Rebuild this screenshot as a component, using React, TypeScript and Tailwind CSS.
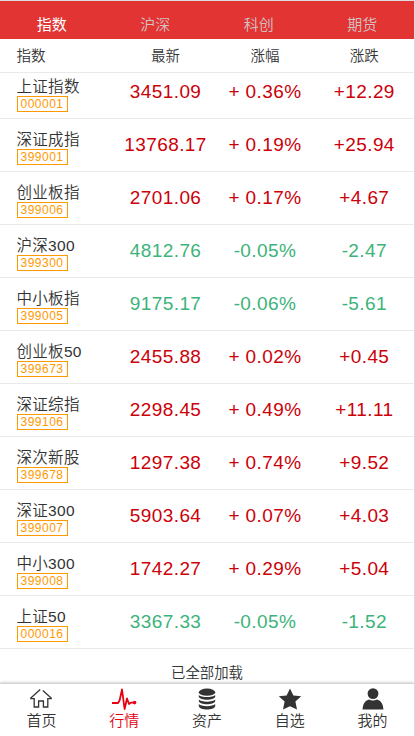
import { ReactNode } from "react";

interface IndexRow {
  name: string;
  code: string;
  price: string;
  percent: string;
  change: string;
}

const tabs = ["指数", "沪深", "科创", "期货"];

const rows: IndexRow[] = [
  { name: "上证指数", code: "000001", price: "3451.09", percent: "+ 0.36%", change: "+12.29" },
  { name: "深证成指", code: "399001", price: "13768.17", percent: "+ 0.19%", change: "+25.94" },
  { name: "创业板指", code: "399006", price: "2701.06", percent: "+ 0.17%", change: "+4.67" },
  { name: "沪深300", code: "399300", price: "4812.76", percent: "-0.05%", change: "-2.47" },
  { name: "中小板指", code: "399005", price: "9175.17", percent: "-0.06%", change: "-5.61" },
  { name: "创业板50", code: "399673", price: "2455.88", percent: "+ 0.02%", change: "+0.45" },
  { name: "深证综指", code: "399106", price: "2298.45", percent: "+ 0.49%", change: "+11.11" },
  { name: "深次新股", code: "399678", price: "1297.38", percent: "+ 0.74%", change: "+9.52" },
  { name: "深证300", code: "399007", price: "5903.64", percent: "+ 0.07%", change: "+4.03" },
  { name: "中小300", code: "399008", price: "1742.27", percent: "+ 0.29%", change: "+5.04" },
  { name: "上证50", code: "000016", price: "3367.33", percent: "-0.05%", change: "-1.52" },
];

const navItems: { label: string; icon: ReactNode }[] = [
  {
    label: "首页",
    icon: (
      <path
        d="M10.2 1.6 L0.8 10 V10.7 H4.2 V19 H8.6 V13 H13.4 V19 H17.8 V10.7 H21.2 V10 L12.8 2.4"
        fill="none"
        stroke="currentColor"
        strokeWidth="1.3"
      />
    ),
  },
  {
    label: "行情",
    icon: (
      <>
        <path
          d="M-1 15 H5 L6.6 12.5 L9 1.5 L11.6 21 L14 10.5 L16 16 L17.8 14.6 H21.5"
          fill="none"
          stroke="currentColor"
          strokeWidth="1.8"
          strokeLinejoin="round"
        />
        <circle cx="21.6" cy="14.6" r="1.8" fill="currentColor" />
      </>
    ),
  },
  {
    label: "资产",
    icon: (
      <g fill="currentColor">
        <ellipse cx="11" cy="4.2" rx="8.2" ry="3.6" />
        <path d="M2.8 7 C5 9.8 17 9.8 19.2 7 V8.8 C18 12.8 4 12.8 2.8 8.8 Z" />
        <path d="M2.8 11.6 C5 14.4 17 14.4 19.2 11.6 V13.2 C18 17.2 4 17.2 2.8 13.2 Z" />
        <path d="M2.8 16.1 C5 18.9 17 18.9 19.2 16.1 V18.2 C18 22.6 4 22.6 2.8 18.2 Z" />
      </g>
    ),
  },
  {
    label: "自选",
    icon: (
      <path
        d="M11 0.4 L14.4 7.4 L22.2 8.3 L16.4 13.6 L18 21.6 L11 18.2 L4 21.6 L5.6 13.6 L-0.2 8.3 L7.6 7.4 Z"
        fill="currentColor"
      />
    ),
  },
  {
    label: "我的",
    icon: (
      <g fill="currentColor">
        <circle cx="11" cy="5.6" r="5.4" />
        <path d="M0.6 21.6 C0.6 15 4 12.2 7 11.4 C9.4 12.9 12.6 12.9 15 11.4 C18 12.2 21.4 15 21.4 21.6 Z" />
      </g>
    ),
  },
];

function StockRow({ row }: { row: IndexRow }) {
  const color = row.change.startsWith("-") ? "text-[#3cb37a]" : "text-[#cc0009]";

  return (
    <div className="grid h-[53px] shrink-0 grid-cols-[28%_24%_24%_24%] border-b border-[#eaeaea] tracking-[0.4px]">
      <div className="pt-[10px] pl-[16.5px]">
        <p className="h-5 text-[15.5px] leading-[21px] tracking-[0.3px]">{row.name}</p>
        <p className="h-4 w-[51px] border border-[#ff9900] pl-[3px] text-xs leading-[14px] tracking-[0.5px] text-[#ff9900]">
          {row.code}
        </p>
      </div>
      {[row.price, row.percent, row.change].map((value, i) => (
        <div key={i} className={`pt-[13px] text-center text-[19px] leading-[26px] whitespace-nowrap ${color}`}>
          {value}
        </div>
      ))}
    </div>
  );
}

export default function App() {
  return (
    <div className="flex h-[736px] w-[415px] flex-col overflow-hidden border-t border-r border-[#dcdcdc] bg-white font-['Liberation_Sans','Noto_Sans_CJK_SC',sans-serif] font-[350] text-[#333]">
      <header className="grid h-[38px] shrink-0 grid-cols-4 bg-[#e33434] pt-[10px] text-center text-[15px] leading-7">
        {tabs.map((tab, i) => (
          <span key={tab} className={i === 0 ? "font-normal text-white" : "text-[#d1c4c4]"}>
            {tab}
          </span>
        ))}
      </header>

      <div className="grid h-[34px] shrink-0 grid-cols-[28%_24%_24%_24%] border-b border-[#eaeaea] text-center text-[14.5px] leading-[35px]">
        <span className="pl-[16.5px] text-left">指数</span>
        <span>最新</span>
        <span>涨幅</span>
        <span>涨跌</span>
      </div>

      <main className="min-h-0 flex-1 overflow-hidden">
        <div className="-mt-[7px] flex flex-col">
          {rows.map((row) => (
            <StockRow key={row.code} row={row} />
          ))}
          <p className="pt-3 text-center text-[14.4px] leading-6">已全部加载</p>
        </div>
      </main>

      <nav className="relative grid h-[53px] shrink-0 grid-cols-5 border-t border-[#d5d5d5] bg-white pt-1 shadow-[0_0_3px_rgba(0,0,0,0.3)]">
        {navItems.map((item) => (
          <div
            key={item.label}
            className={`flex flex-col items-center ${item.label === "行情" ? "text-[#e60012]" : "text-[#333]"}`}
          >
            <svg viewBox="0 0 22 22" className="size-[22px] overflow-visible">
              {item.icon}
            </svg>
            <span className="text-[15px] leading-[22px]">{item.label}</span>
          </div>
        ))}
      </nav>
    </div>
  );
}
